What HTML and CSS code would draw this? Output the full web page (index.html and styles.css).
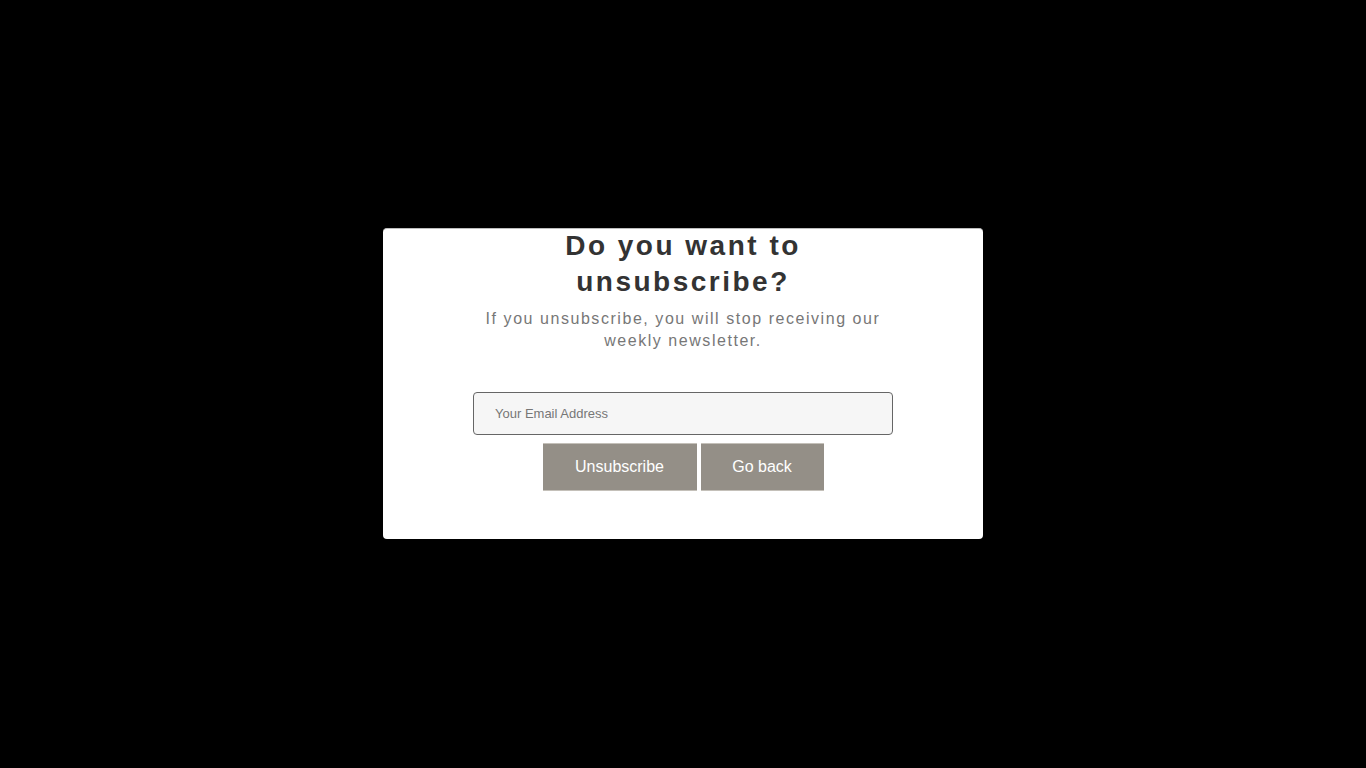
FILE: index.html
```html
<!DOCTYPE html>
<html>
<head>
<meta charset="utf-8">
<link rel="stylesheet" href="styles.css">
</head>
<body>
<div class="overlay">
  <div class="modal">
    <div class="content">
      <h1 class="title">Do you want to unsubscribe?</h1>
      <p class="subtitle">If you unsubscribe, you will stop receiving our weekly newsletter.</p>
      <input class="email" type="text" placeholder="Your Email Address">
      <div class="actions">
        <button class="btn btn-unsub">Unsubscribe</button>
        <button class="btn btn-back">Go back</button>
      </div>
    </div>
  </div>
</div>
</body>
</html>
```
FILE: styles.css
```css
html, body {
  margin: 0;
  padding: 0;
  background: #000;
  height: 100%;
}
.overlay {
  height: 768px;
  display: flex;
  align-items: flex-start;
  justify-content: center;
  padding-top: 228px;
  box-sizing: border-box;
}
.modal {
  width: 600px;
  height: 311px;
  background: #fff;
  border-radius: 4px;
  border-top: 1px solid #bdbdbd;
  box-sizing: border-box;
  font-family: "Liberation Sans", Arial, sans-serif;
}
.content {
  width: 420px;
  margin: -1px auto 0;
  display: flex;
  flex-direction: column;
  align-items: center;
  text-align: center;
}
.title {
  margin: 0;
  font-size: 28px;
  line-height: 36px;
  font-weight: bold;
  letter-spacing: 2.5px;
  color: #333;
}
.subtitle {
  margin: 8px 0 0;
  font-size: 16px;
  line-height: 22px;
  letter-spacing: 1.55px;
  color: #777;
  width: 410px;
}
.email {
  margin-top: 40px;
  width: 420px;
  height: 43px;
  box-sizing: border-box;
  border: 1px solid #666;
  border-radius: 4px;
  background: #f6f6f6;
  padding: 0 21px;
  font-family: "Liberation Sans", Arial, sans-serif;
  font-size: 13px;
  color: #333;
  outline: none;
}
.email::placeholder {
  color: #777;
}
.actions {
  margin-top: 8px;
  display: flex;
  gap: 4px;
}
.btn {
  height: 48px;
  box-sizing: border-box;
  border: none;
  border-top: 1px solid #c4c0b9;
  border-bottom: 1px solid #c4c0b9;
  background: #948f87;
  color: #fff;
  font-family: "Liberation Sans", Arial, sans-serif;
  font-size: 16px;
  padding: 0;
  cursor: pointer;
}
.btn-unsub {
  width: 154px;
}
.btn-back {
  width: 123px;
}
```
